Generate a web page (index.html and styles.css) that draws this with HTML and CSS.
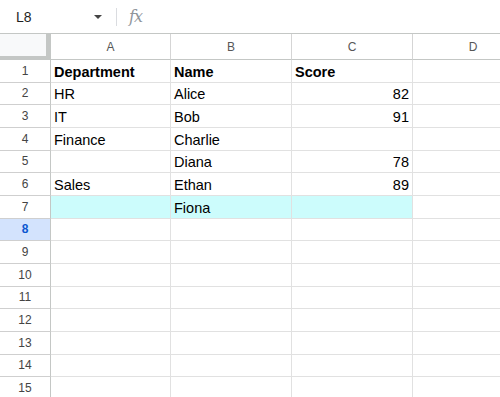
FILE: index.html
```html
<!DOCTYPE html>
<html lang="en">

<head>
  <meta charset="UTF-8" />
  <meta name="viewport" content="width=device-width, initial-scale=1.0" />
  <title>Sheet</title>
  <link rel="stylesheet" href="styles.css">
</head>

<body>
  <div class="formula-bar">
    <div class="name-box">
      <span class="cell-ref">L8</span>
      <span class="caret"></span>
    </div>
    <div class="divider"></div>
    <span class="fx">fx</span>
  </div>

  <div class="grid">
    <div class="row head">
      <div class="corner"></div>
      <div class="col-head">A</div>
      <div class="col-head">B</div>
      <div class="col-head">C</div>
      <div class="col-head">D</div>
    </div>
    <div class="row">
      <div class="row-head">1</div>
      <div class="cell bold">Department</div>
      <div class="cell bold">Name</div>
      <div class="cell bold">Score</div>
      <div class="cell"></div>
    </div>
    <div class="row">
      <div class="row-head">2</div>
      <div class="cell">HR</div>
      <div class="cell">Alice</div>
      <div class="cell num">82</div>
      <div class="cell"></div>
    </div>
    <div class="row">
      <div class="row-head">3</div>
      <div class="cell">IT</div>
      <div class="cell">Bob</div>
      <div class="cell num">91</div>
      <div class="cell"></div>
    </div>
    <div class="row">
      <div class="row-head">4</div>
      <div class="cell">Finance</div>
      <div class="cell">Charlie</div>
      <div class="cell num"></div>
      <div class="cell"></div>
    </div>
    <div class="row">
      <div class="row-head">5</div>
      <div class="cell"></div>
      <div class="cell">Diana</div>
      <div class="cell num">78</div>
      <div class="cell"></div>
    </div>
    <div class="row">
      <div class="row-head">6</div>
      <div class="cell">Sales</div>
      <div class="cell">Ethan</div>
      <div class="cell num">89</div>
      <div class="cell"></div>
    </div>
    <div class="row">
      <div class="row-head">7</div>
      <div class="cell fill"></div>
      <div class="cell fill">Fiona</div>
      <div class="cell fill num"></div>
      <div class="cell"></div>
    </div>
    <div class="row">
      <div class="row-head selected">8</div>
      <div class="cell"></div><div class="cell"></div><div class="cell"></div><div class="cell"></div>
    </div>
    <div class="row">
      <div class="row-head">9</div>
      <div class="cell"></div><div class="cell"></div><div class="cell"></div><div class="cell"></div>
    </div>
    <div class="row">
      <div class="row-head">10</div>
      <div class="cell"></div><div class="cell"></div><div class="cell"></div><div class="cell"></div>
    </div>
    <div class="row">
      <div class="row-head">11</div>
      <div class="cell"></div><div class="cell"></div><div class="cell"></div><div class="cell"></div>
    </div>
    <div class="row">
      <div class="row-head">12</div>
      <div class="cell"></div><div class="cell"></div><div class="cell"></div><div class="cell"></div>
    </div>
    <div class="row">
      <div class="row-head">13</div>
      <div class="cell"></div><div class="cell"></div><div class="cell"></div><div class="cell"></div>
    </div>
    <div class="row">
      <div class="row-head">14</div>
      <div class="cell"></div><div class="cell"></div><div class="cell"></div><div class="cell"></div>
    </div>
    <div class="row">
      <div class="row-head">15</div>
      <div class="cell"></div><div class="cell"></div><div class="cell"></div><div class="cell"></div>
    </div>
  </div>
</body>

</html>
```

FILE: styles.css
```css
* {
  box-sizing: border-box;
}

body {
  margin: 0;
  font-family: "Liberation Sans", Arial, sans-serif;
  background: #fff;
  color: #000;
  overflow: hidden;
}

.formula-bar {
  display: flex;
  align-items: center;
  height: 34px;
  border-bottom: 1px solid #c4c7c5;
  background: #fff;
}

.name-box {
  display: flex;
  align-items: center;
  justify-content: space-between;
  width: 116px;
  padding: 0 14px 0 16px;
}

.cell-ref {
  font-size: 14px;
  color: #1f1f1f;
}

.caret {
  width: 0;
  height: 0;
  border-left: 4px solid transparent;
  border-right: 4px solid transparent;
  border-top: 4px solid #444;
}

.divider {
  width: 1px;
  height: 18px;
  background: #dadce0;
}

.fx {
  margin-left: 12px;
  font-family: "DejaVu Serif", "Liberation Serif", serif;
  font-style: italic;
  font-size: 16px;
  color: #8f959b;
  letter-spacing: -1px;
}

.grid {
  width: 100%;
  overflow: hidden;
}

.row {
  display: grid;
  grid-template-columns: 51px 120px 121px 121px 121px;
  height: 22.67px;
}

.row.head {
  height: 26px;
}

.corner {
  background: #f8f9fa;
  border-right: 5px solid #c4c7c5;
  border-bottom: 4px solid #c4c7c5;
}

.col-head {
  display: flex;
  align-items: center;
  justify-content: center;
  background: #fff;
  border-right: 1px solid #d5d5d5;
  border-bottom: 1px solid #c4c7c5;
  font-size: 12px;
  color: #575757;
}

.row-head {
  display: flex;
  align-items: center;
  justify-content: center;
  background: #fff;
  border-right: 1px solid #c4c7c5;
  border-bottom: 1px solid #cfcfcf;
  font-size: 12px;
  color: #444;
}

.row-head.selected {
  background: #d3e3fd;
  color: #0b57d0;
  font-weight: bold;
}

.cell {
  display: flex;
  align-items: flex-end;
  padding: 0 3px 2px;
  border-right: 1px solid #e1e1e1;
  border-bottom: 1px solid #e1e1e1;
  font-size: 14.5px;
  white-space: nowrap;
  overflow: hidden;
}

.cell.bold {
  font-weight: bold;
}

.cell.num {
  justify-content: flex-end;
}

.cell.fill {
  background: #ccfcfc;
}
```
